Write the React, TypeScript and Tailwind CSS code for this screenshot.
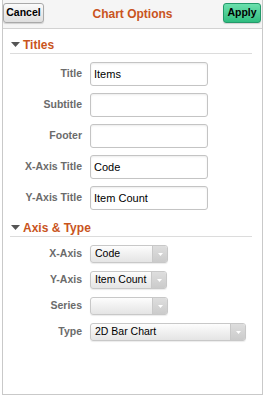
import React from "react";

const font = { fontFamily: '"Liberation Sans", Arial, sans-serif' };

function SectionHeading({ title }: { title: string }) {
    return (
        <div className="ml-[7px] mr-[10px] flex h-[17px] items-center border-b border-[#dcdcdc] pb-[1px]">
            <svg width="9" height="5" viewBox="0 0 9 5" className="ml-[1px] mr-[3px]">
                <path d="M0 0 L9 0 L4.5 5 Z" fill="#555" />
            </svg>
            <span className="text-[12px] font-bold leading-none text-[#c9541d]">{title}</span>
        </div>
    );
}

function TextRow({ label, value }: { label: string; value: string }) {
    return (
        <div className="flex items-center gap-[8px]">
            <span className="w-[79px] text-right text-[10.5px] font-bold text-[#6b6b6b]">{label}</span>
            <div className="flex h-[24px] w-[118px] items-center rounded-[3px] border border-[#c4c4c4] bg-white px-[3px] text-[11px] text-black shadow-[inset_0_1px_2px_rgba(0,0,0,0.08)]">
                {value}
            </div>
        </div>
    );
}

function SelectRow({ label, value, width }: { label: string; value: string; width: string }) {
    return (
        <div className="flex items-center gap-[8px]">
            <span className="w-[79px] text-right text-[10.5px] font-bold text-[#6b6b6b]">{label}</span>
            <div className={`flex h-[18px] ${width} overflow-hidden rounded-[3px] border border-[#c8c8c8] bg-gradient-to-b from-[#fdfdfd] to-[#e4e4e4] shadow-[0_1px_1px_rgba(0,0,0,0.08)]`}>
                <span className="flex min-w-0 flex-1 items-center overflow-hidden whitespace-nowrap pl-[4px] text-[10.5px] text-black">{value}</span>
                <span className="flex w-[15px] shrink-0 items-center justify-center border-l border-[#c8c8c8] bg-gradient-to-b from-[#dedede] to-[#cbcbcb]">
                    <svg width="5" height="3" viewBox="0 0 5 3">
                        <path d="M0 0 L5 0 L2.5 3 Z" fill="#fff" />
                    </svg>
                </span>
            </div>
        </div>
    );
}

export default function App() {
    return (
        <div className="h-[397px] w-[265px] bg-white" style={font}>
            <div className="ml-[2px] h-[395px] w-[261px] border-x border-b border-[#c9c9c9] bg-white">
                <div className="relative flex h-[29px] items-start justify-between border-b border-[#d2d2d2] bg-[#f5f5f5] pr-[1px] pt-[3px]">
                    <button className="flex h-[20px] w-[41px] items-center justify-center rounded-[3px] border border-[#a9a9a9] bg-gradient-to-b from-[#fbfbfb] to-[#dedede] text-[10.5px] font-bold text-black shadow-[0_1px_1px_rgba(0,0,0,0.15)]">
                        Cancel
                    </button>
                    <span className="absolute left-0 right-0 top-[8px] text-center text-[12px] font-bold leading-none text-[#c9541d]">
                        Chart Options
                    </span>
                    <button className="flex h-[20px] w-[38px] items-center justify-center rounded-[3px] border border-[#23996a] bg-gradient-to-b from-[#6ae0ad] to-[#2ebd80] text-[10.5px] font-bold text-black shadow-[0_1px_1px_rgba(0,0,0,0.15)]">
                        Apply
                    </button>
                </div>

                <div className="mt-[8px]">
                    <SectionHeading title="Titles" />
                </div>
                <div className="mt-[8px] flex flex-col gap-[7px]">
                    <TextRow label="Title" value="Items" />
                    <TextRow label="Subtitle" value="" />
                    <TextRow label="Footer" value="" />
                    <TextRow label="X-Axis Title" value="Code" />
                    <TextRow label="Y-Axis Title" value="Item Count" />
                </div>

                <div className="mt-[10px]">
                    <SectionHeading title="Axis & Type" />
                </div>
                <div className="mt-[8px] flex flex-col gap-[8px]">
                    <SelectRow label="X-Axis" value="Code" width="w-[78px]" />
                    <SelectRow label="Y-Axis" value="Item Count" width="w-[77px]" />
                    <SelectRow label="Series" value="" width="w-[78px]" />
                    <SelectRow label="Type" value="2D Bar Chart" width="w-[156px]" />
                </div>
            </div>
        </div>
    );
}
